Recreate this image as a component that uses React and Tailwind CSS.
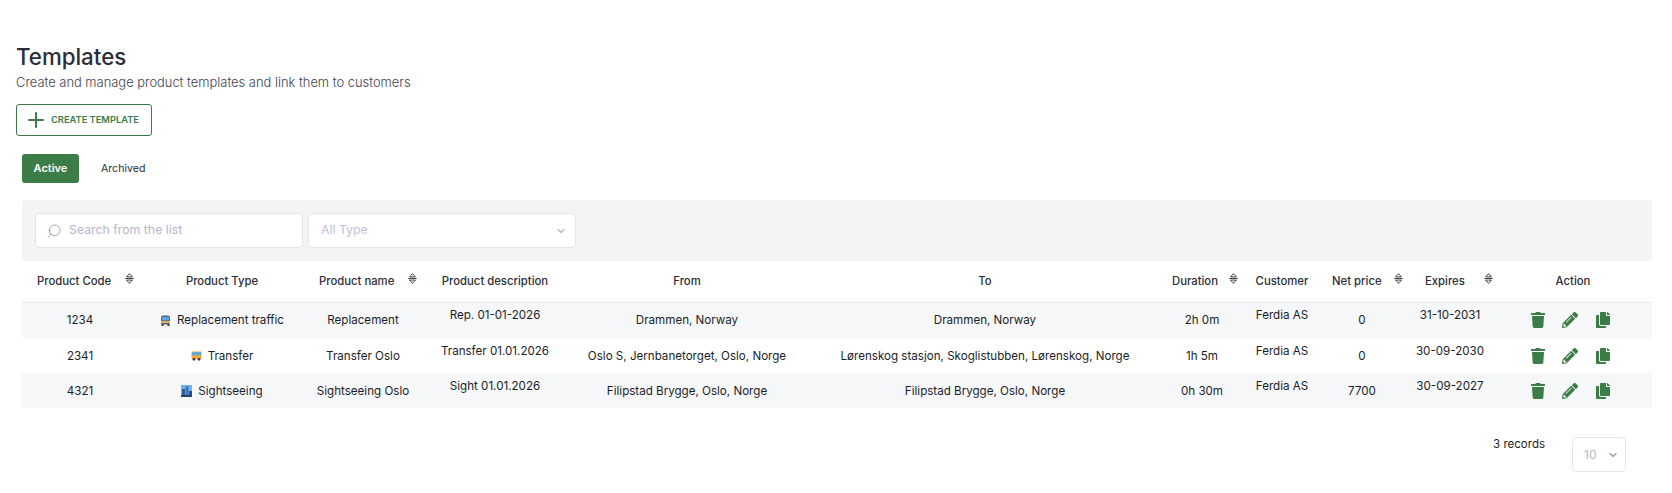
import React from "react";
import { Search, ChevronDown, Plus } from "lucide-react";
import { FaTrash, FaPencilAlt, FaCopy } from "react-icons/fa";

function SortIcon({ className = "" }) {
  return (
    <svg width="9" height="11" viewBox="0 0 9 11" className={`shrink-0 ${className}`} fill="none" stroke="#2d2f3a" strokeWidth="0.9">
      <path d="M4.5 0.6 L7.4 3.9 H1.6 Z" />
      <path d="M0.3 5.5 H8.7" />
      <path d="M4.5 10.4 L7.4 7.1 H1.6 Z" />
    </svg>
  );
}

function BusFront() {
  return (
    <svg width="11" height="11" viewBox="0 0 11 11" className="shrink-0">
      <rect x="1" y="0.5" width="9" height="9" rx="2" fill="#5b5f78" />
      <rect x="2" y="2" width="7" height="3.4" fill="#5aa9e6" />
      <rect x="1" y="6" width="9" height="2" fill="#e8b24a" />
      <rect x="1.5" y="9" width="2" height="2" fill="#3a3a4a" />
      <rect x="7.5" y="9" width="2" height="2" fill="#3a3a4a" />
    </svg>
  );
}

function BusSide() {
  return (
    <svg width="11" height="10" viewBox="0 0 11 10" className="shrink-0">
      <rect x="0.5" y="0.5" width="10" height="7.5" rx="1" fill="#f2a93b" />
      <rect x="1" y="1.2" width="9" height="3" fill="#5aa9e6" />
      <circle cx="3" cy="8.3" r="1.4" fill="#4a3a4a" />
      <circle cx="8" cy="8.3" r="1.4" fill="#4a3a4a" />
    </svg>
  );
}

function City() {
  return (
    <svg width="11" height="12" viewBox="0 0 11 12" className="shrink-0">
      <rect width="11" height="12" fill="#6fb2e8" />
      <rect x="1" y="4" width="3" height="8" fill="#2f5f9e" />
      <rect x="4.5" y="1.5" width="3" height="10.5" fill="#3b74b8" />
      <rect x="8" y="6" width="3" height="6" fill="#2a4f86" />
      <rect x="0" y="10" width="11" height="2" fill="#24406e" />
    </svg>
  );
}

const colClasses = ["w-[116px]", "w-[168px]", "w-[114px]", "w-[150px]", "w-[234px]", "w-[362px]", "w-[72px]", "w-[88px]", "w-[72px]", "w-[104px]", "w-[150px]"];

const rows = [
  { code: "1234", icon: <BusFront />, type: "Replacement traffic", name: "Replacement", desc: "Rep. 01-01-2026", from: "Drammen, Norway", to: "Drammen, Norway", dur: "2h 0m", price: "0", exp: "31-10-2031", h: "h-[36px]" },
  { code: "2341", icon: <BusSide />, type: "Transfer", name: "Transfer Oslo", desc: "Transfer 01.01.2026", from: "Oslo S, Jernbanetorget, Oslo, Norge", to: "Lørenskog stasjon, Skoglistubben, Lørenskog, Norge", dur: "1h 5m", price: "0", exp: "30-09-2030", h: "h-[35px]" },
  { code: "4321", icon: <City />, type: "Sightseeing", name: "Sightseeing Oslo", desc: "Sight 01.01.2026", from: "Filipstad Brygge, Oslo, Norge", to: "Filipstad Brygge, Oslo, Norge", dur: "0h 30m", price: "7700", exp: "30-09-2027", h: "h-[35px]" },
];

function Th({ children, className = "" }) {
  return <th className={`p-0 font-medium whitespace-nowrap ${className}`}>{children}</th>;
}

function Sortable({ label, pad, gap }) {
  return (
    <div className={`flex items-center ${pad} ${gap}`}>
      <span>{label}</span>
      <SortIcon className="-mt-[6px]" />
    </div>
  );
}

export default function App() {
  return (
    <div className="w-[1672px] h-[493px] bg-white overflow-hidden font-[Inter,sans-serif] text-[#1b1d2a] pt-[42px] pl-[16px] pr-[20px]">
      <h1 className="text-[22.3px] leading-[30px] font-medium text-[#2b2d38]">Templates</h1>
      <p className="mt-[1px] text-[12.9px] leading-[20px] font-light text-[#3f4254]">Create and manage product templates and link them to customers</p>
      <button className="mt-[11px] h-[32px] w-[136px] flex items-center border border-[#3c7d47] rounded-[3px] pl-[7px] text-[#3c7d47] bg-white">
        <Plus size={24} strokeWidth={2} className="shrink-0" />
        <span className="ml-[3px] text-[9.3px] font-semibold whitespace-nowrap">CREATE TEMPLATE</span>
      </button>

      <div className="ml-[6px]">
        <div className="mt-[18px] flex items-center">
          <div className="h-[29px] w-[57px] flex items-center justify-center rounded-[3px] bg-[#3c7d47] text-white text-[11px] font-semibold">Active</div>
          <div className="ml-[22px] text-[10.6px] text-[#2b2d38]">Archived</div>
        </div>

        <div className="mt-[17px] h-[61px] rounded-t-[4px] bg-[#f4f4f5] flex items-center pl-[13px] gap-[5px]">
          <div className="h-[35px] w-[268px] flex items-center bg-white border border-[#e4e6ef] rounded-[4px] pl-[10px]">
            <Search size={16} strokeWidth={1.2} className="text-[#8d90a8] -scale-x-100" />
            <span className="ml-[7px] text-[12.3px] text-[#b5b5d0]">Search from the list</span>
          </div>
          <div className="h-[35px] w-[268px] flex items-center justify-between bg-white border border-[#e4e6ef] rounded-[4px] pl-[12px] pr-[8px]">
            <span className="text-[12.3px] text-[#c0c1d6]">All Type</span>
            <ChevronDown size={12} strokeWidth={2.5} className="text-[#b5b5c8]" />
          </div>
        </div>

        <table className="table-fixed w-[1630px] border-collapse text-[11.6px] leading-[18px]">
          <colgroup>
            {colClasses.map((c, i) => <col key={i} className={c} />)}
          </colgroup>
          <thead>
            <tr className="h-[41px] border-b border-[#e9ebf0] text-[#2b2d38] text-[11.3px]">
              <Th><Sortable label="Product Code" pad="pl-[15px]" gap="gap-[14px]" /></Th>
              <Th className="text-center">Product Type</Th>
              <Th><Sortable label="Product name" pad="pl-[13px]" gap="gap-[14px]" /></Th>
              <Th className="text-center">Product description</Th>
              <Th className="text-center">From</Th>
              <Th className="text-center">To</Th>
              <Th><Sortable label="Duration" pad="pl-[6px]" gap="gap-[11px]" /></Th>
              <Th className="text-center">Customer</Th>
              <Th><Sortable label="Net price" pad="pl-[6px]" gap="gap-[12px]" /></Th>
              <Th><Sortable label="Expires" pad="pl-[27px]" gap="gap-[19px]" /></Th>
              <Th className="text-center pr-[8px]">Action</Th>
            </tr>
          </thead>
          <tbody>
            {rows.map((r, i) => (
              <tr key={r.code} className={`${r.h} text-center whitespace-nowrap ${i % 2 === 0 ? "bg-[#f6f7f9]" : "bg-white"}`}>
                <td className="p-0">{r.code}</td>
                <td className="p-0">
                  <div className="flex items-center justify-center gap-[6px]">{r.icon}<span>{r.type}</span></div>
                </td>
                <td className="p-0">{r.name}</td>
                <td className="p-0 pb-[10px]">{r.desc}</td>
                <td className="p-0">{r.from}</td>
                <td className="p-0">{r.to}</td>
                <td className="p-0">{r.dur}</td>
                <td className="p-0 pb-[10px]">Ferdia AS</td>
                <td className="p-0">{r.price}</td>
                <td className="p-0 pb-[10px]">{r.exp}</td>
                <td className="p-0">
                  <div className="flex items-center pl-[29px] gap-[17px] text-[#3c7d47]">
                    <FaTrash className="w-[14px] h-[16px]" />
                    <FaPencilAlt className="w-[16px] h-[16px]" />
                    <FaCopy className="w-[16px] h-[16px]" />
                  </div>
                </td>
              </tr>
            ))}
          </tbody>
        </table>

        <div className="mt-[27px] mr-[26px] flex justify-end items-start text-[11.5px] text-[#1b1d2a]">
          <span className="leading-[18px]">3 records</span>
          <div className="mt-[2px] ml-[27px] h-[35px] w-[54px] flex items-center border border-[#e4e6ef] rounded-[4px] pl-[11px] text-[#b5b5d0] text-[12px]">
            <span>10</span>
            <ChevronDown size={12} strokeWidth={3} className="ml-[11px] text-[#9d9fb8]" />
          </div>
        </div>
      </div>
    </div>
  );
}
